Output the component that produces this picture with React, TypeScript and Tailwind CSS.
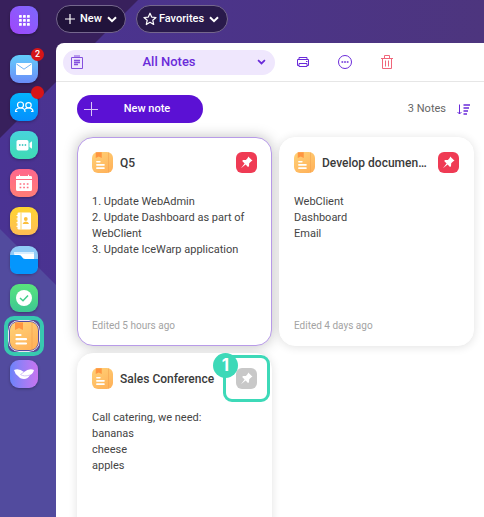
import type { ReactNode } from "react";

type Note = {
  title: string;
  body: string[];
  edited: string;
  pinned: boolean;
  selected?: boolean;
  step?: number;
};

const notes: Note[] = [
  {
    title: "Q5",
    body: ["1. Update WebAdmin", "2. Update Dashboard as part of WebClient", "3. Update IceWarp application"],
    edited: "Edited 5 hours ago",
    pinned: true,
    selected: true,
  },
  {
    title: "Develop documentation",
    body: ["WebClient", "Dashboard", "Email"],
    edited: "Edited 4 days ago",
    pinned: true,
  },
  {
    title: "Sales Conference",
    body: ["Call catering, we need:", "bananas", "cheese", "apples"],
    edited: "",
    pinned: false,
    step: 1,
  },
];

function Backdrop() {
  return (
    <svg className="absolute inset-0 -z-10 h-full w-full" aria-hidden="true">
      <defs>
        <linearGradient id="sky" x1="0" y1="0" x2="1" y2="0">
          <stop offset="0" stopColor="#4a3393" />
          <stop offset="1" stopColor="#4d357e" />
        </linearGradient>
      </defs>
      <rect width="100%" height="100%" fill="url(#sky)" />
      <polygon points="0,0 138,0 0,138" fill="#38205c" />
      <polygon points="0,229 1200,1429 0,1429" fill="#524b9e" />
    </svg>
  );
}

function Chevron({ className }: { className?: string }) {
  return (
    <svg viewBox="0 0 10 7" className={className} fill="none" stroke="currentColor" strokeWidth="2" aria-hidden="true">
      <path d="M1 1.2 5 5.2 9 1.2" />
    </svg>
  );
}

function NoteIcon({ className }: { className: string }) {
  return (
    <svg viewBox="0 0 28 28" className={className} aria-hidden="true">
      <defs>
        <linearGradient id="paper" x1="0" y1="0" x2="0.6" y2="1">
          <stop offset="0" stopColor="#ffd277" />
          <stop offset="1" stopColor="#ffb45c" />
        </linearGradient>
      </defs>
      <rect width="28" height="28" rx="8" fill="url(#paper)" />
      <path d="M22 0.5V27.5" stroke="#f2a04d" strokeWidth="0.700" />
      <path d="M5 0.4H13V8L9 6L5 8Z" fill="#ff9540" />
      <g stroke="#fff" strokeWidth="2.2" strokeLinecap="round">
        <path d="M6.5 13H10.500M6.500 17.200H16M6.500 21.500H16" />
      </g>
    </svg>
  );
}

function Pushpin() {
  return (
    <svg viewBox="0 0 21 21" className="size-[21px]" aria-hidden="true">
      <path d="M12.2 4.500 16.500 8.800 15.300 9.300 13.200 11.300 13 14.200 12 14.900 9.600 12.500 5 16.300 8.600 11.500 6.200 9.100 7 8.100 9.900 7.900 11.700 5.900Z" fill="#fff" />
    </svg>
  );
}

const apps: { name: string; tile: string; badge?: string; icon: ReactNode }[] = [
  {
    name: "Mail",
    tile: "bg-linear-to-b from-[#62cdfb] to-[#6a8cf8]",
    badge: "2",
    icon: (
      <>
        <rect x="6" y="8" width="16" height="12" rx="0.800" fill="#fff" />
        <path d="M6.500 9 14 14.200 21.500 9" fill="none" stroke="#72b4f5" strokeWidth="1" />
      </>
    ),
  },
  {
    name: "TeamChat",
    tile: "bg-linear-to-b from-[#04b4ff] to-[#068ffc]",
    badge: "",
    icon: (
      <g fill="none" stroke="#fff" strokeWidth="1.200" strokeLinecap="round">
        <circle cx="10.500" cy="12" r="3" />
        <circle cx="18.500" cy="12.300" r="2.700" />
        <path d="M5.500 18.500C5.500 16 7 15 10.500 15S15 16.500 15 18.500M15.500 15.800C18 14 23 15 23 18.500M5.500 18.500H7M21.500 18.500H23" />
      </g>
    ),
  },
  {
    name: "Meetings",
    tile: "bg-linear-to-b from-[#48d4dc] to-[#40dbb4]",
    icon: (
      <g fill="#fff">
        <rect x="6.500" y="9" width="12" height="10.500" rx="1.800" />
        <path d="M19.500 12 22 10.200V17.800L19.500 16Z" />
        <g fill="#45c9c3">
          <circle cx="9.800" cy="14" r="0.900" />
          <circle cx="12.600" cy="14" r="0.900" />
          <circle cx="15.400" cy="14" r="0.900" />
        </g>
      </g>
    ),
  },
  {
    name: "Calendar",
    tile: "bg-linear-to-b from-[#ff678c] to-[#ff7d76]",
    icon: (
      <>
        <path d="M6 10V8.300Q6 7 7.300 7H9V5.800H10V7H18V5.800H19V7H20.700Q22 7 22 8.300V10ZM6 11H22V20.500Q22 22 20.500 22H7.500Q6 22 6 20.500Z" fill="#fff" />
        <path d="M9.600 15H19M9.600 18.500H19" stroke="#ff6f81" strokeWidth="1.600" strokeDasharray="1.700 1.900" />
      </>
    ),
  },
  {
    name: "Contacts",
    tile: "bg-linear-to-b from-[#fed52f] to-[#ffbd53]",
    icon: (
      <>
        <rect x="7.500" y="5.500" width="13.500" height="17" rx="1.300" fill="#fff" />
        <path d="M11 5.500V22.500" stroke="#ffcb40" strokeWidth="0.800" />
        <path d="M6.500 8.500H9M6.500 12H9M6.500 15.700H9M6.500 19.300H9" stroke="#fff" strokeWidth="1.200" />
        <circle cx="15.800" cy="12" r="1.900" fill="#fbbf3d" />
        <path d="M12.600 17Q13 14.500 15.800 14.500T19 17Z" fill="#fbbf3d" />
      </>
    ),
  },
];

const moreApps: typeof apps = [
  {
    name: "Files",
    tile: "bg-[#91cbf7]",
    icon: (
      <>
        <path d="M4 6H24V16H4Z" fill="#d9efff" />
        <path d="M5 8H24V16H5Z" fill="#fff" />
        <path d="M0 9H9Q11 9 12 11T15 13H28V20Q28 28 20 28H8Q0 28 0 20Z" fill="#0496fd" />
      </>
    ),
  },
  {
    name: "Tasks",
    tile: "bg-linear-to-b from-[#59e47c] to-[#3dc792]",
    icon: (
      <>
        <circle cx="14" cy="14" r="8" fill="#fff" />
        <path d="M10 14 13 16.800 18 11.500" fill="none" stroke="#43ce8b" strokeWidth="1.500" />
      </>
    ),
  },
];

function Tile({ app }: { app: (typeof apps)[number] }) {
  return (
    <button type="button" aria-label={app.name} className={`relative size-7 rounded-[9px] shadow-[0_1px_3px_#0000004d] ${app.tile}`}>
      <svg viewBox="0 0 28 28" className="size-7" aria-hidden="true">{app.icon}</svg>
      {app.badge !== undefined && (
        <span className="absolute -top-[7px] left-[21px] flex size-[13px] items-center justify-center rounded-full bg-[#d61518] text-[9px] font-medium text-white">
          {app.badge}
        </span>
      )}
    </button>
  );
}

function Sidebar() {
  return (
    <nav aria-label="Applications" className="flex w-14 shrink-0 flex-col items-start pt-[6px] pl-[10px]">
      <button type="button" aria-label="All applications" className="size-7 rounded-[9px] bg-linear-to-tr from-[#a044fb] to-[#7b68fd] shadow-[0_1px_3px_#0000004d]">
        <svg viewBox="0 0 28 28" className="size-7" fill="#fff" aria-hidden="true">
          {[9, 13, 17].map((y) => [9, 13, 17].map((x) => <rect key={`${x}-${y}`} x={x} y={y} width="2.800" height="2.800" rx="0.600" />))}
        </svg>
      </button>
      <div className="mt-[21px] flex flex-col gap-[10px]">
        {apps.map((app) => <Tile key={app.name} app={app} />)}
      </div>
      <div className="mt-[11px] flex flex-col gap-[10px]">
        {moreApps.map((app) => <Tile key={app.name} app={app} />)}
        <button type="button" aria-label="Notes" className="relative size-7 rounded-[9px]">
          <NoteIcon className="size-7" />
          <span className="absolute -inset-[2px] rounded-[11px] border border-[#e9e4f4] outline-1 outline-[#5b4a90]" />
          <span className="absolute -inset-[6px] rounded-[10px] border-4 border-[#38c9b0]" />
        </button>
        <button type="button" aria-label="IceWarp" className="size-7 rounded-[9px] bg-linear-to-r from-[#6a83fa] to-[#c774f0] shadow-[0_1px_3px_#0000004d]">
          <svg viewBox="0 0 28 28" className="size-7" aria-hidden="true">
            <path d="M4 10Q9 8 14 12Q19 8 24 10Q23 14 20 15Q18 19 14 19Q10 19 8 16Q5 14 4 10Z" fill="#fff" />
            <path d="M14 12 10.500 14.500Q14 17 20 15" fill="none" stroke="#c9b6f5" strokeWidth="0.800" />
          </svg>
        </button>
      </div>
    </nav>
  );
}

function Card({ note }: { note: Note }) {
  return (
    <article
      className={`flex h-[209px] min-w-0 flex-col rounded-2xl border bg-white px-[14px] pt-[14px] pb-[11px] ${
        note.selected ? "border-[#b89be8] shadow-[0_0_14px_#00000040]" : "border-white shadow-[0_1px_10px_#0000001f]"
      }`}
    >
      <header className="flex items-center">
        <NoteIcon className="size-[21px] shrink-0" />
        <h2 className="ml-[7px] min-w-0 flex-1 truncate text-[12px] leading-5 font-medium text-[#3a3a3a]">{note.title}</h2>
        <div className="relative ml-2 size-[21px] shrink-0">
          <button type="button" aria-label={note.pinned ? "Unpin note" : "Pin note"} className={`block size-[21px] rounded-[6px] ${note.pinned ? "bg-[#ef3b54]" : "bg-[#c8c8c8]"}`}>
            <Pushpin />
          </button>
          {note.step && (
            <>
              <span className="absolute -inset-[13px] rounded-[9px] border-[3px] border-[#3dd9b8]" />
              <span className="absolute -top-[15px] -left-[23px] flex size-[25px] items-center justify-center rounded-full bg-[#3dd9b8] font-[Inter,sans-serif] text-[17px] font-bold text-white">
                {note.step}
              </span>
            </>
          )}
        </div>
      </header>
      <div className="mt-[21px] text-[11px] leading-4 text-[#444]">
        {note.body.map((line) => <p key={line}>{line}</p>)}
      </div>
      {note.edited && <footer className="mt-auto text-[10px] leading-4 text-[#a3a3a3]">{note.edited}</footer>}
    </article>
  );
}

function Toolbar() {
  return (
    <div className="flex h-[39px] items-center border-b border-[#e6e6e6] pr-3 pl-[7px] text-[#6a2bd9]">
      <div className="relative flex h-[25px] min-w-0 flex-[0_1_212px] items-center rounded-full bg-[#efe7fd]">
        <svg viewBox="0 0 12 14" className="absolute left-[8px] h-[14px] w-3" fill="none" stroke="#8450de" aria-hidden="true">
          <path d="M0.500 2.500H11.500V13.500H0.500ZM3 1H9" />
          <path d="M3 5.500H9M3 7.500H9M3 9.500H7" strokeWidth="1.300" />
        </svg>
        <select aria-label="Folder" className="h-full w-full appearance-none bg-transparent px-6 text-center text-[13px] font-medium outline-none [text-align-last:center]">
          <option>All Notes</option>
        </select>
        <Chevron className="pointer-events-none absolute right-[9px] h-[6px] w-[9px]" />
      </div>
      <button type="button" aria-label="Print" className="ml-[21px]">
        <svg viewBox="0 0 14 14" className="size-[14px]" fill="none" stroke="currentColor" aria-hidden="true">
          <path d="M3 4.500V2.500H11V4.500M3 10.500H1.500V4.500H12.500V10.500H11" />
          <path d="M3 8.500H11V11.500H3ZM10 6.500H11.500" />
        </svg>
      </button>
      <button type="button" aria-label="More actions" className="ml-[27px]">
        <svg viewBox="0 0 16 16" className="size-4" aria-hidden="true">
          <circle cx="8" cy="8" r="6.500" fill="none" stroke="currentColor" />
          <path d="M4.500 8H11.500" stroke="currentColor" strokeWidth="1.700" strokeDasharray="1.700 0.950" />
        </svg>
      </button>
      <button type="button" aria-label="Delete" className="ml-[27px] text-[#f0667a]">
        <svg viewBox="0 0 14 16" className="h-4 w-[14px]" fill="none" stroke="currentColor" aria-hidden="true">
          <path d="M1 4.500H13M4.500 4V1.500H9.500V4M2.500 4.500V14.500H11.500V4.500M5.500 6.500V12.500M8.500 6.500V12.500" />
        </svg>
      </button>
    </div>
  );
}

export default function App() {
  return (
    <div className="relative isolate flex h-screen overflow-hidden font-[Roboto,sans-serif]">
      <Backdrop />
      <Sidebar />
      <div className="flex min-w-0 flex-1 flex-col">
        <div className="flex gap-[10px] pt-[5px] pb-[10px] text-[11px] font-medium text-white">
          <button type="button" className="flex h-7 items-center rounded-full border border-[#75678d] bg-[#21133b] px-2">
            <svg viewBox="0 0 10 10" className="mr-[5px] size-[10px]" stroke="currentColor" strokeWidth="1.200" aria-hidden="true">
              <path d="M5 0V10M0 5H10" />
            </svg>
            New
            <Chevron className="ml-[5px] h-[7px] w-[10px]" />
          </button>
          <button type="button" className="flex h-7 items-center rounded-full border border-[#75678d] bg-[#291a4b] pr-2 pl-[6px]">
            <svg viewBox="0 0 14 14" className="mr-[2px] size-[14px]" fill="none" stroke="currentColor" strokeWidth="1.200" strokeLinejoin="round" aria-hidden="true">
              <path d="M7 1.200 8.700 5.100 13 5.500 9.800 8.300 10.700 12.500 7 10.300 3.300 12.500 4.200 8.300 1 5.500 5.300 5.100Z" />
            </svg>
            Favorites
            <Chevron className="ml-[5px] h-[7px] w-[10px]" />
          </button>
        </div>
        <main className="min-h-0 flex-1 overflow-hidden rounded-tl-lg bg-white">
          <Toolbar />
          <div className="pr-[10px] pl-[21px]">
            <div className="flex items-center justify-between pt-[13px] pr-1 pb-[14px]">
              <button type="button" className="relative flex h-7 w-[126px] items-center justify-center rounded-full bg-[#5b11d4] pl-[14px] text-[11px] font-medium text-white">
                <svg viewBox="0 0 14 14" className="absolute left-[7px] size-[14px]" stroke="#d9c7f7" aria-hidden="true">
                  <path d="M7.500 0V14M0 7.500H14" />
                </svg>
                New note
              </button>
              <div className="flex items-center gap-[11px] text-[11px] text-[#666]">
                <span>3 Notes</span>
                <button type="button" aria-label="Sort notes">
                  <svg viewBox="0 0 13 11" className="h-[11px] w-[13px]" fill="none" stroke="#6a2bd9" aria-hidden="true">
                    <path d="M2.500 0.500V10M0.500 8 2.500 10 4.500 8" />
                    <path d="M6.500 1H13M6.500 4H12M6.500 7H11M6.500 10H10" strokeWidth="1.400" />
                  </svg>
                </button>
              </div>
            </div>
            <section aria-label="Notes" className="grid grid-cols-[repeat(auto-fill,minmax(190px,1fr))] gap-[7px]">
              {notes.map((note) => <Card key={note.title} note={note} />)}
            </section>
          </div>
        </main>
      </div>
    </div>
  );
}
